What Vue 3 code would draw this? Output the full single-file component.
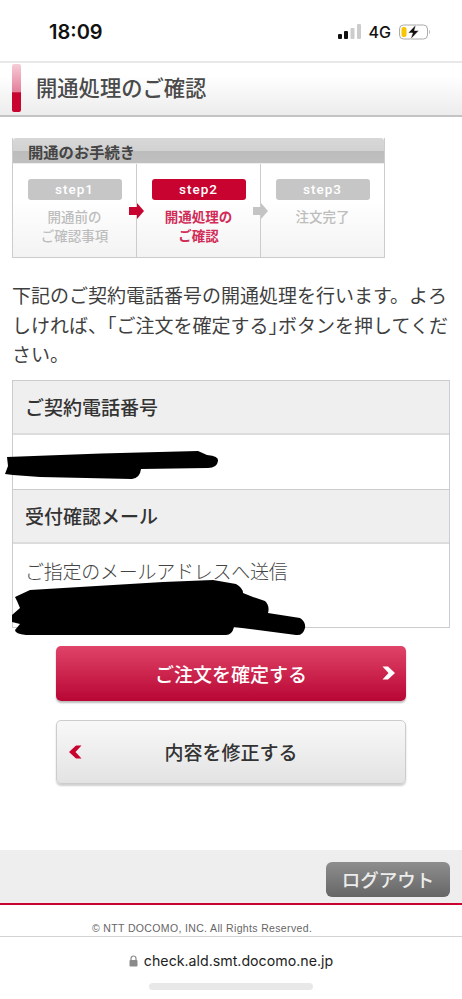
<template>
  <div class="page">
    <header class="status-bar">
      <span class="status-bar__time">18:09</span>
      <div class="status-bar__right">
        <svg class="signal" width="23" height="15" viewBox="0 0 23 15" aria-hidden="true">
          <rect x="0" y="10" width="4" height="5" rx="1" fill="#111" />
          <rect x="6" y="7" width="4" height="8" rx="1" fill="#111" />
          <rect x="12.500" y="4" width="4" height="11" rx="1" fill="#ccc" />
          <rect x="19" y="0" width="4" height="15" rx="1" fill="#ccc" />
        </svg>
        <span class="status-bar__net">4G</span>
        <svg class="battery" width="32" height="16" viewBox="0 0 32 16" aria-hidden="true">
          <rect x="0.500" y="1" width="28" height="14" rx="4" fill="none" stroke="#aaa" />
          <rect x="2.500" y="3" width="5" height="10" rx="2" fill="#f7c600" />
          <path d="M30 6 C31.200 6.500 31.200 9.500 30 10 Z" fill="#aaa" />
          <path d="M17 0.500 L9 9 H13.500 L11.500 15.500 L20 6.500 H15.500 Z" fill="#111" stroke="#fff" stroke-width="0.600" />
        </svg>
      </div>
    </header>

    <div class="title-bar">
      <span class="title-bar__mark" />
      <h1 class="title-bar__text">開通処理のご確認</h1>
    </div>

    <section class="steps">
      <div class="steps__head">開通のお手続き</div>
      <div class="steps__body">
        <div
          v-for="step in steps"
          :key="step.name"
          class="step"
          :class="{ 'step--active': step.active }"
        >
          <div class="step__pill">{{ step.name }}</div>
          <div class="step__label">
            <div v-for="line in step.lines" :key="line">{{ line }}</div>
          </div>
          <svg
            v-if="step.arrow"
            class="step__arrow"
            width="15"
            height="16"
            viewBox="0 0 15 16"
            aria-hidden="true"
          >
            <path d="M0 4 H8 V0 L15 8 L8 16 V12 H0 Z" :fill="step.arrow" />
          </svg>
        </div>
      </div>
    </section>

    <p class="lead">
      下記のご契約電話番号の開通処理を行います。よろ<br />しければ、<span class="half">「</span>ご注文を確定する<span class="half">」</span>ボタンを押してくだ<br />さい。
    </p>

    <div class="info">
      <div class="info__head">ご契約電話番号</div>
      <div class="info__cell info__cell--tel" />
      <div class="info__head info__head--second">受付確認メール</div>
      <div class="info__cell info__cell--mail">ご指定のメールアドレスへ送信</div>
      <!-- scribbled out in the screenshot -->
      <svg class="info__scribble" width="438" height="248" viewBox="12 380 438 248" aria-hidden="true">
        <path d="M7 457 Q100 453 198 451 L207 455 Q219 456 218 461 Q217 468 208 468 L141 469 Q140 478 132 479 L40 477 L13 475 L5 474 L8 466 Z" />
        <path d="M30 590 L163 582 L213 580 L236 584 Q243 588 243 593 L253 597 L265 601 Q270 606 268 613 L300 618 Q306 622 305 628 Q303 636 296 635 L234 627 Q232 635 226 635 L26 635 Q15 634 15 630 L20 624 L12 622 L12 615 L20 608 L17 601 L15 597 Z" />
      </svg>
    </div>

    <div class="actions">
      <button type="button" class="btn btn--primary">
        ご注文を確定する
        <svg class="btn__chevron btn__chevron--right" width="14" height="14" viewBox="0 0 14 14" aria-hidden="true">
          <path d="M0.500 0.500 H6 L13 7 L6 13.500 H0.500 L6.500 7 Z" fill="#fff" />
        </svg>
      </button>
      <button type="button" class="btn btn--secondary">
        内容を修正する
        <svg class="btn__chevron btn__chevron--left" width="14" height="14" viewBox="0 0 14 14" aria-hidden="true">
          <path d="M13.500 0.500 H8 L1 7 L8 13.500 H13.500 L7.500 7 Z" fill="#c8032f" />
        </svg>
      </button>
    </div>

    <div class="logout-bar">
      <button type="button" class="logout">ログアウト</button>
    </div>
    <div class="copyright">© NTT DOCOMO, INC. All Rights Reserved.</div>

    <footer class="url-bar">
      <div class="url-bar__url">
        <svg width="9" height="12" viewBox="0 0 9 12" aria-hidden="true">
          <path d="M2 5.500 V3.500 a2.500 2.500 0 0 1 5 0 V5.500" fill="none" stroke="#8a8a8a" stroke-width="1.200" />
          <rect x="0.500" y="5" width="8" height="6.500" rx="1" fill="#8a8a8a" />
        </svg>
        <span>check.ald.smt.docomo.ne.jp</span>
      </div>
      <div class="url-bar__home" />
    </footer>
  </div>
</template>

<script setup>
const steps = [
  { name: 'step1', lines: ['開通前の', 'ご確認事項'], arrow: '#c8032f' },
  { name: 'step2', lines: ['開通処理の', 'ご確認'], active: true, arrow: '#c4c4c4' },
  { name: 'step3', lines: ['注文完了'] },
];
</script>

<style>
html,
body {
  margin: 0;
  background: #fff;
}
</style>

<style scoped>
.page {
  width: 462px;
  height: 999px;
  overflow: hidden;
  display: flex;
  flex-direction: column;
  background: #fff;
  font-family: "Noto Sans CJK JP", "Noto Sans", sans-serif;
  color: #444;
}

.status-bar {
  height: 61px;
  flex: none;
  box-sizing: border-box;
  padding: 2px 31px 0 49px;
  display: flex;
  align-items: center;
  justify-content: space-between;
  font-family: Inter, sans-serif;
  color: #111;
}

.status-bar__time {
  font-size: 20px;
  font-weight: 600;
}

.status-bar__right {
  display: flex;
  align-items: center;
  gap: 8px;
}

.status-bar__net {
  font-size: 16px;
  font-weight: 500;
}

.title-bar {
  height: 56px;
  flex: none;
  box-sizing: border-box;
  border-top: 2px solid #e8e8e8;
  border-bottom: 2px solid #c4c4c4;
  background: linear-gradient(#fff, #fff 25%, #ececec);
  display: flex;
  align-items: center;
  padding: 0 0 2px 12px;
}

.title-bar__mark {
  width: 9px;
  height: 48px;
  border-radius: 2px;
  background: linear-gradient(#f6cdd8, #e47f9a 58%, #c8032f 60%, #c8032f);
}

.title-bar__text {
  margin: 0 0 3px 15px;
  font-size: 21.300px;
  font-weight: 500;
  color: #4a4a4a;
}

.steps {
  width: 373px;
  height: 120px;
  flex: none;
  box-sizing: border-box;
  margin: 21px 0 0 12px;
  border: 1px solid #ccc;
  border-top: none;
  display: flex;
  flex-direction: column;
}

.steps__head {
  height: 26px;
  flex: none;
  box-sizing: border-box;
  padding-left: 15px;
  border-radius: 3px 3px 0 0;
  background: linear-gradient(#d8d8d8, #d2d2d2 50%, #bcbcbc 52%, #c0c0c0);
  border-bottom: 1px solid #eee;
  font-size: 15.300px;
  font-weight: 700;
  line-height: 26px;
  color: #444;
}

.steps__body {
  flex: 1;
  display: grid;
  grid-template-columns: 124px 124px 1fr;
  background: linear-gradient(#fff, #fff 40%, #f3f3f3);
}

.step {
  position: relative;
  box-sizing: border-box;
  padding-top: 15px;
  border-right: 1px solid #ccc;
  display: flex;
  flex-direction: column;
  align-items: center;
}

.step:last-child {
  border-right: none;
}

.step__pill {
  width: 94px;
  height: 21px;
  border-radius: 3px;
  background: #c6c6c6;
  color: #fff;
  font-family: Roboto, sans-serif;
  font-size: 13.500px;
  font-weight: 500;
  line-height: 20px;
  text-align: center;
  letter-spacing: 1px;
}

.step__label {
  margin-top: 7px;
  font-size: 13.500px;
  line-height: 19px;
  color: #bdbdbd;
  text-align: center;
  font-weight: 500;
}

.step--active .step__pill {
  background: #c8032f;
}

.step--active .step__label {
  color: #d12c57;
  font-weight: 700;
}

.step__arrow {
  position: absolute;
  right: -8px;
  top: 39px;
}

.lead {
  margin: 22px 0 0 12px;
  font-size: 19px;
  line-height: 29.500px;
  color: #3f3f3f;
  white-space: nowrap;
}

.half {
  font-feature-settings: "halt";
}

.info {
  position: relative;
  width: 438px;
  height: 248px;
  flex: none;
  box-sizing: border-box;
  margin: 11px 0 0 12px;
  border: 1px solid #ccc;
  display: flex;
  flex-direction: column;
  font-size: 19px;
}

.info__head {
  height: 54px;
  flex: none;
  box-sizing: border-box;
  padding-left: 12px;
  background: #efefef;
  border-bottom: 2px solid #dcdcdc;
  font-weight: 500;
  line-height: 52px;
  color: #333;
}

.info__head--second {
  height: 55px;
  border-top: 1px solid #ccc;
}

.info__cell {
  box-sizing: border-box;
  padding-left: 12px;
}

.info__cell--tel {
  height: 54px;
  flex: none;
}

.info__cell--mail {
  flex: 1;
  padding-top: 9px;
  line-height: 36px;
  letter-spacing: -0.250px;
  color: #444;
  font-weight: 300;
}

.info__scribble {
  position: absolute;
  left: -1px;
  top: -1px;
  overflow: visible;
  fill: #000;
}

.actions {
  flex: none;
  margin: 18px 0 0 56px;
  width: 350px;
  display: flex;
  flex-direction: column;
  gap: 19px;
}

.btn {
  position: relative;
  display: block;
  width: 100%;
  padding: 0;
  border-radius: 5px;
  font-family: inherit;
  font-size: 19px;
  font-weight: 500;
  text-align: center;
}

.btn--primary {
  height: 55px;
  border: none;
  background: linear-gradient(#e04468, #b80634);
  color: #fff;
  box-shadow: 0 2px 2px #bbb;
}

.btn--secondary {
  height: 64px;
  border: 1px solid #ccc;
  background: linear-gradient(#f8f8f8, #e3e3e3);
  color: #333;
  box-shadow: 0 2px 2px #d0d0d0;
}

.btn__chevron {
  position: absolute;
  top: 50%;
  margin-top: -7px;
}

.btn__chevron--right {
  right: 10px;
}

.btn__chevron--left {
  left: 11px;
}

.logout-bar {
  height: 55px;
  flex: none;
  box-sizing: border-box;
  margin-top: 66px;
  padding: 12px 12px 0 0;
  background: #eee;
  border-bottom: 2px solid #c8032f;
  display: flex;
  justify-content: flex-end;
  align-items: flex-start;
}

.logout {
  width: 124px;
  height: 35px;
  padding: 0;
  border: none;
  border-radius: 6px;
  background: linear-gradient(#8e8e8e, #666);
  color: #ececec;
  font-family: inherit;
  font-size: 18.500px;
  font-weight: 500;
  line-height: 35px;
}

.copyright {
  height: 32px;
  flex: none;
  box-sizing: border-box;
  padding: 15px 0 0 92px;
  border-bottom: 1px solid #d4d4d4;
  font-family: "Liberation Sans", sans-serif;
  font-size: 10.500px;
  line-height: 16px;
  letter-spacing: 0.350px;
  color: #666;
  white-space: nowrap;
}

.url-bar {
  flex: 1;
  display: flex;
  flex-direction: column;
  align-items: center;
}

.url-bar__url {
  margin-top: 14px;
  height: 20px;
  display: flex;
  align-items: center;
  gap: 6px;
  font-family: Inter, sans-serif;
  font-size: 14.200px;
  color: #222;
}

.url-bar__home {
  width: 164px;
  height: 7px;
  margin-top: 12px;
  border-radius: 4px;
  background: #e8e8e8;
}
</style>
